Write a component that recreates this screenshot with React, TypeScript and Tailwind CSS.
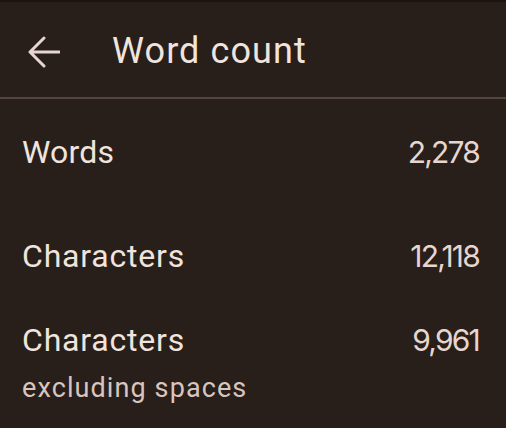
import React from "react";

type Row = { label: string; value: string; sub?: string; labelCls: string; gap: string };

const rows: Row[] = [
  { label: "Words", value: "2,278", labelCls: "tracking-[0.2px]", gap: "mt-[33px]" },
  { label: "Characters", value: "12,118", labelCls: "tracking-[0.8px]", gap: "mt-[64px]" },
  { label: "Characters", value: "9,961", sub: "excluding spaces", labelCls: "tracking-[0.8px]", gap: "mt-[44px]" },
];

function BackArrow() {
  return (
    <svg width="32" height="32" viewBox="0 0 32 32" className="mt-[3px] ml-[28px] shrink-0">
      <path
        d="M31 16H2.5M16 2L2 16l14 14"
        fill="none"
        stroke="#e6d6cf"
        strokeWidth="3"
        strokeLinecap="round"
        strokeLinejoin="round"
      />
    </svg>
  );
}

export default function App() {
  return (
    <div className="w-[506px] h-[428px] overflow-hidden bg-[#281e1a] font-['Roboto',sans-serif]">
      <div className="h-[2px] bg-[#1a1310]" />
      <div className="h-[95px] pt-[2px] flex items-center">
        <BackArrow />
        <div className="ml-[52px] text-[36px] leading-[44px] tracking-[1.1px] text-[#f0e4de]">
          Word count
        </div>
      </div>
      <div className="h-[2px] bg-[#54463f]" />

      <div className="flex flex-col px-[22px]">
        {rows.map((r, i) => (
          <div key={i} className={r.gap}>
            <div className="flex items-start justify-between">
              <div className={"text-[32px] leading-[40px] text-[#f0e4de] " + r.labelCls}>{r.label}</div>
              <div className="mr-[5px] text-[30px] leading-[40px] text-[#e6d6cf] font-['Inter',sans-serif] proportional-nums tracking-[-1.8px]">
                {r.value}
              </div>
            </div>
            {r.sub && (
              <div className="mt-[11px] text-[27px] leading-[34px] tracking-[1.1px] text-[#d8c6be]">{r.sub}</div>
            )}
          </div>
        ))}
      </div>
    </div>
  );
}
